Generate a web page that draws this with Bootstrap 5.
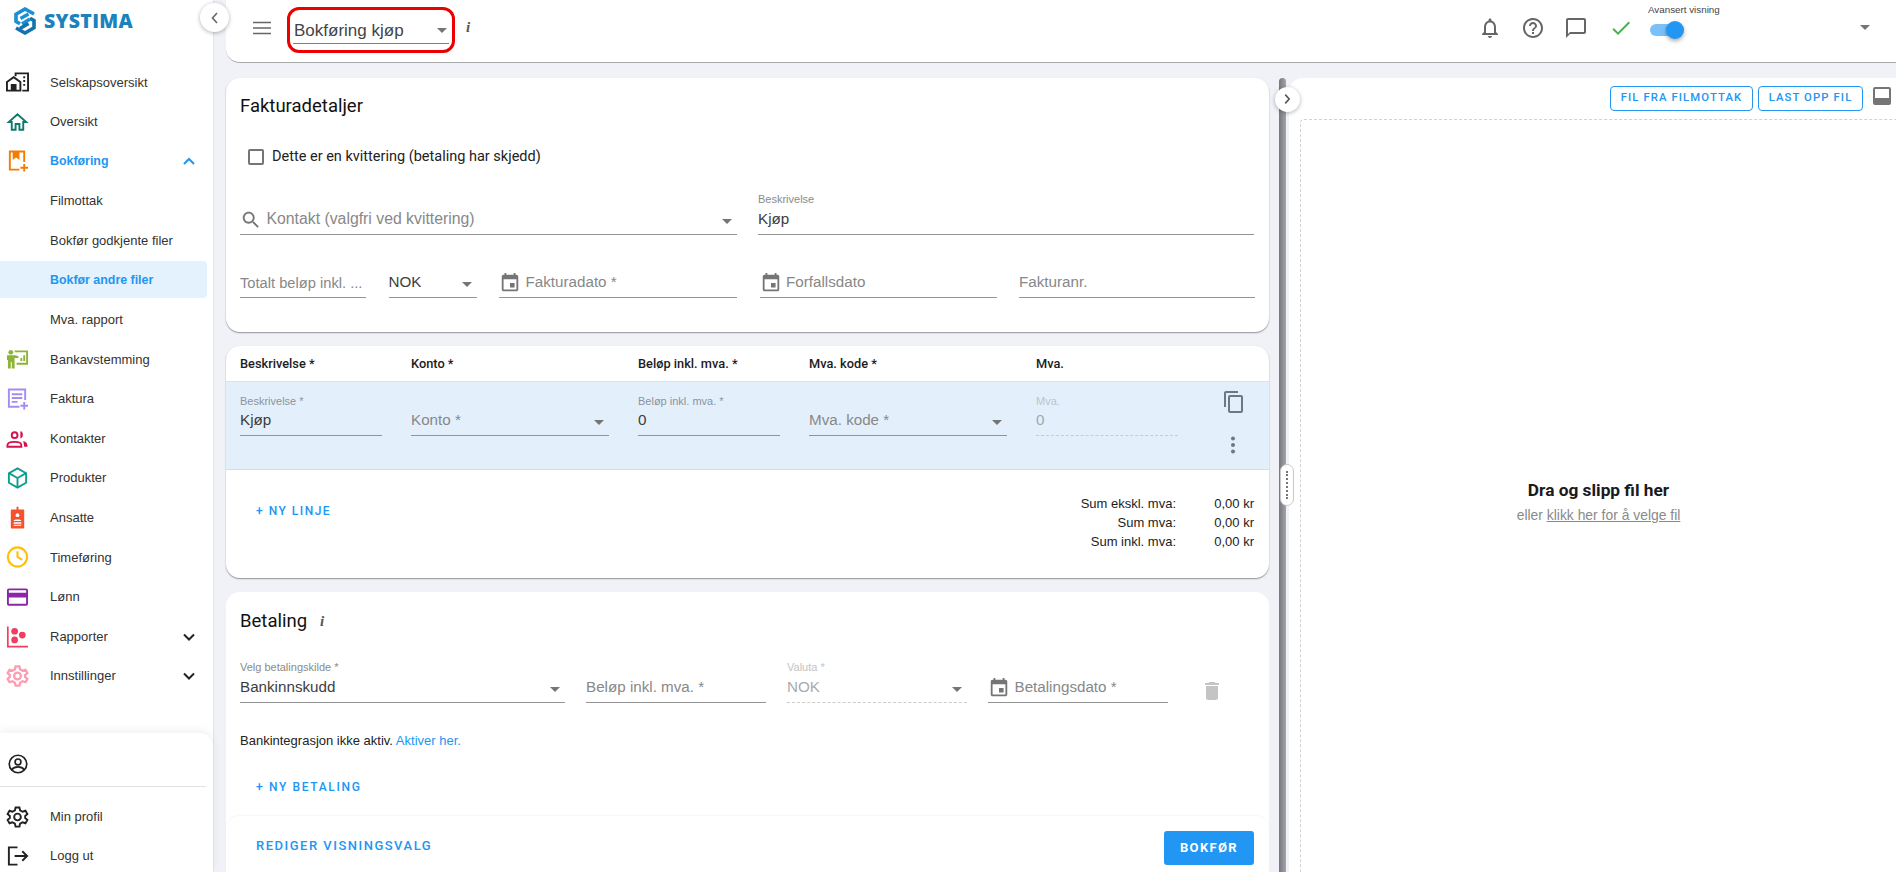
<!DOCTYPE html>
<html lang="no"><head><meta charset="utf-8"><title>Systima</title>
<link href="https://cdn.jsdelivr.net/npm/bootstrap@5.3.0/dist/css/bootstrap.min.css" rel="stylesheet">
<style>
html,body{height:872px;overflow:hidden}
body{font-family:"Liberation Sans",Arial,sans-serif;font-size:13px;color:#212121;background:#f0f2f8}
.shell{height:872px;display:flex}
.side{width:214px;flex:none;background:#fff;display:flex;flex-direction:column;position:relative;border-right:1px solid #e4e5ea}
.brand{height:62.5px;flex:none;display:flex;align-items:flex-start;padding:6px 0 0 14px;gap:8px}
.brand svg{margin-top:1px}
.brand-name{font-family:"Open Sans",sans-serif;font-weight:800;font-size:19.500px;letter-spacing:.3px;color:#1a82bd;line-height:30px}
.navi{display:flex;align-items:center;height:39.6px;flex:none;padding-left:50px;position:relative;color:#333;white-space:nowrap}
.navi svg.ico{position:absolute;left:6px;top:50%;transform:translateY(-50%);width:23px;height:23px}
.navi svg.chev{position:absolute;left:181px;top:50%;transform:translateY(-50%);width:16px;height:16px}
.navi.open{color:#2196f3;font-weight:700;font-size:12.400px}
.navi.cur{color:#2196f3;font-weight:700;font-size:12.400px;background:#e3f2fd;width:207px;border-radius:0 4px 4px 0;height:37px;margin:1px 0 1.6px}
.side-foot{margin-top:auto;height:139px;flex:none;border-radius:0 14px 0 0;box-shadow:0 -3px 10px rgba(0,0,0,.06);background:#fff}
.who{height:54px;border-bottom:1px solid #e2e2e2;margin-right:7px;margin-bottom:10px;position:relative}
.who svg{position:absolute;left:8px;top:21px;width:20px;height:20px}
.side-foot .navi{height:39px}
.fold{position:absolute;width:29px;height:29px;border-radius:50%;background:#fff;box-shadow:0 1px 4px rgba(0,0,0,.3);display:flex;align-items:center;justify-content:center;z-index:5}
.fold-l{left:200px;top:3px}
.main{flex:1;min-width:0;padding-left:12px;display:flex;flex-direction:column}
.topbar{height:63px;flex:none;background:#fff;border-radius:0 0 0 14px;border-bottom:1px solid #a9a9a9;display:flex;align-items:center;position:relative}
.burger{margin-left:27px;width:18px;height:18px;margin-top:-6px}
.sel-wrap{margin-left:16px;width:168px;height:46px;border:3.5px solid #ec0000;border-radius:12px;padding:0 3px;align-self:flex-start;margin-top:7px}
.sel-in{height:33.500px;border-bottom:1px solid #2196f3;display:flex;align-items:center;justify-content:space-between;font-size:17px;color:#444;padding:9px 2px 0 1px}
.caret-d{width:0;height:0;border-left:5px solid transparent;border-right:5px solid transparent;border-top:5px solid #757575;display:inline-block;flex:none}
.ital{font-family:"Liberation Serif",serif;font-style:italic;font-weight:700;color:#555;font-size:15px}
.top-i{margin-left:11px;margin-top:-7px}
.tools{margin-left:auto;display:flex;align-items:center;gap:19px;padding-right:26px;height:56px;align-self:flex-start}
.tools svg{width:24px;height:24px;flex:none}
.tools .check{margin:0 -.6px 0 1.200px}
.advbox{width:69px;height:60px;position:relative;flex:none;margin-left:-3px}
.adv{position:absolute;left:0;top:5px;font-size:9.800px;color:#444;white-space:nowrap}
.sw-t{position:absolute;left:2px;top:26px;width:28px;height:12px;border-radius:6px;background:#7cc0f9}
.sw-k{position:absolute;left:18px;top:23px;width:18px;height:18px;border-radius:50%;background:#2196f3;box-shadow:0 2px 4px rgba(0,0,0,.35)}
.tools .caret-d{margin-left:124px;margin-top:-2px}
.split{flex:1;display:flex;min-height:0}
.left-pane{width:1043px;flex:none;padding-top:15px;display:flex;flex-direction:column;gap:14px;position:relative}
.sheet{background:#fff;border-radius:14px;box-shadow:0 1px 1.5px rgba(0,0,0,.4)}
.sheet-a{height:254px;padding:0 14px;flex:none}
.sheet-b{height:232px;flex:none;position:relative;overflow:hidden}
.sheet-c{flex:1;padding:0 14px;position:relative;border-radius:14px 14px 0 0;box-shadow:none}
.ttl{font-family:Roboto,sans-serif;font-size:18.5px;font-weight:400;color:#111;line-height:24px}
.ttl-a{padding-top:16px}
.chk{display:flex;align-items:center;gap:8px;margin:28px 0 0 8px;font-size:14.5px;color:#222;font-family:Roboto,sans-serif}
.box{width:16px;height:16px;border:2px solid #757575;border-radius:2px;flex:none}
.gridrow{display:grid}
.r1{grid-template-columns:497px 496px;margin-top:20px;column-gap:21px}
.r2{grid-template-columns:126px 88px 238px 237px 236px;margin-top:16px;column-gap:22.5px}
.fld{height:47px;border-bottom:1px solid #949494;position:relative;display:flex;align-items:flex-end;padding-bottom:3px;font-size:15.200px;color:#888;white-space:nowrap;overflow:hidden}
.fld.wide-txt{font-size:15.800px}
.fld.tight-txt{font-size:14.700px}
.fld .lab{position:absolute;left:0;top:3px;font-size:11px;color:#8a8a8a}
.fld .val{color:#3d3d3d}
.fld .caret-d{margin-left:auto;margin-right:5px;margin-bottom:7px}
.fld svg{width:22px;height:22px;margin-right:4.500px;flex:none}
.fld.off{border-bottom:1px dashed #ccc;color:#aaa}
.fld.off .lab{color:#c3c3c3}
.fld.off .val{color:#aaa}
.heads{height:36px;display:grid;grid-template-columns:142px 198px 142px 198px 142px;column-gap:29px;padding-left:14px;align-items:center;border-bottom:1px solid #dfe3e8;font-family:Roboto,sans-serif;font-size:12.800px;font-weight:500;color:#1c1c1c}
.linerow{height:88px;background:#e3f0fc;border-bottom:1px solid #d8dde3;display:grid;grid-template-columns:142px 198px 142px 198px 142px;column-gap:29px;padding:8px 0 0 14px;position:relative;align-content:start}
.linerow .fld{border-bottom-color:#8c96a0;height:46px}
.linerow .fld.off{border-bottom:1px dashed #c4cbd2}
.linerow .lab{color:#8b939b}
.linerow .fld.off .lab{color:#bcc4cc}
.linerow .fld.off .val{color:#a0a8b0}
.copy{position:absolute;left:996px;top:8px;width:24px;height:24px}
.dots{position:absolute;left:995px;top:51px;width:24px;height:24px}
.ny{font-family:Roboto,sans-serif;font-weight:500;font-size:12px;letter-spacing:1.500px;color:#2196f3;white-space:nowrap}
.ny-a{position:absolute;left:30px;top:156px}
.sums{position:absolute;right:15px;top:148px;display:grid;grid-template-columns:auto 78px;text-align:right;font-size:13px;line-height:19px;color:#1c1c1c}
.pay-h{display:flex;gap:13px;align-items:center;padding-top:17px}
.pay{grid-template-columns:325px 180px 180px 180px;margin-top:23px;column-gap:21px}
.trash{position:absolute;left:974px;top:87px;width:24px;height:24px}
.bank{margin-top:28px;font-size:13px;color:#222}
.bank a{color:#2196f3;text-decoration:none}
.ny-b{position:absolute;left:30px;top:186px;letter-spacing:1.650px}
.foot{position:absolute;left:0;right:0;bottom:0;height:56px;background:#fff;border-radius:14px 14px 0 0;box-shadow:0 -1px 2px rgba(0,0,0,.04);display:flex;align-items:center;justify-content:space-between;padding:0 15px 0 30px}
.ny-c{font-size:13px;letter-spacing:1.500px;margin-top:4px}
.go{background:#2196f3;color:#fff;font-family:Roboto,sans-serif;font-weight:700;font-size:13px;letter-spacing:1.350px;border:0;border-radius:3px;width:90px;height:34px;padding:0;margin-top:7px}
.bar{width:20px;flex:none;position:relative;margin-top:15px;z-index:6}
.bar-line{position:absolute;left:10px;top:0;bottom:0;width:7px;border-radius:4px 4px 0 0;background:linear-gradient(90deg,#76777c,#a3a4a9)}
.knob{position:absolute;left:11px;top:386px;width:14px;height:42px;background:#fff;border:1px solid #c9c9c9;border-radius:7px;display:flex;align-items:center;justify-content:center;z-index:4}
.knob i{display:block;height:28px;border-left:2px dotted #777}
.fold-r{position:absolute;left:5.500px;top:8.500px;width:25px;height:25px;border-radius:50%;background:#fff;box-shadow:0 1px 4px rgba(0,0,0,.3);display:flex;align-items:center;justify-content:center;z-index:5}
.right-pane{flex:1;min-width:0;background:#fff;margin-top:15px;padding-left:11px;display:flex;flex-direction:column;position:relative;border-radius:14px 0 0 0}
.filebar{height:26px;display:flex;justify-content:flex-end;gap:5px;flex:none;padding-right:33px;margin:8px 0 0}
.ob{font-family:Roboto,sans-serif;font-weight:500;font-size:11.300px;letter-spacing:1.100px;color:#2196f3;border:1px solid #2196f3;border-radius:4px;background:#fff;padding:0;height:25px;white-space:nowrap}
.ob-a{width:143px}.ob-b{width:105px}
.dockic{position:absolute;right:5px;top:9px;width:18px;height:18px;background:#757575;border-radius:2px}
.dockic::after{content:"";position:absolute;left:2px;right:2px;top:2px;height:9px;background:#fff}
.drop{flex:1;margin-top:7px;border:1px dashed #d2d2d2;border-width:1px 0 0 1px;border-radius:4px 0 0 0;display:flex;flex-direction:column;align-items:center;justify-content:center;padding-top:12px}
.drop b{font-family:Roboto,sans-serif;font-size:17.300px;font-weight:700;color:#1a1a1a}
.drop span{font-size:13.900px;color:#8a8a8a;margin-top:1px}
.drop u{color:#8a8a8a}
</style></head><body>
<div class="shell">
<aside class="side">
  <div class="fold fold-l"><svg width="16" height="16" viewBox="0 0 16 16" fill="none" stroke="#666" stroke-width="1.6"><path d="M10 3 5.500 8l4.500 5"/></svg></div>
  <div class="brand">
    <svg width="22" height="28" viewBox="0 0 22 28" fill="none" stroke-width="3.600" stroke-linejoin="miter"><path stroke="#1b8fd6" d="M20 7 11 2 2 7.200v7.300l4 2.300"/><path stroke="#1572ad" d="M2 21l9 5 9-5.200v-7.300l-4-2.300"/><path stroke="#1b8fd6" d="M6.500 11.500 14.500 7M8 17l8-5"/><path stroke="#1572ad" d="M6 21.500l8.500-5"/></svg>
    <span class="brand-name">SYSTIMA</span>
  </div>
  <div class="navi"><svg class="ico" viewBox="0 0 24 24" fill="none" stroke="#222" stroke-width="2"><path d="M1 12 8 7l7 5v9H1z"/><path d="M6 21v-6h4v6" fill="#222"/><path d="M10 6V3h13v18h-6"/><path d="M18 7h2M18 11h2M18 15h2"/></svg>Selskapsoversikt</div>
  <div class="navi"><svg class="ico" viewBox="0 0 24 24" fill="none" stroke="#0f7a6c" stroke-width="2"><path d="M3 12 12 4l9 8h-3v8h-4v-6h-4v6H6v-8z"/></svg>Oversikt</div>
  <div class="navi open"><svg class="ico" viewBox="0 0 24 24" fill="none" stroke="#f57c00" stroke-width="2"><path d="M14 21H4V2h15v11"/><path d="M8 2v7l2.500-2 2.500 2V2" fill="#f57c00"/><path d="M19 15v8M15 19h8"/></svg>Bokføring<svg class="chev" viewBox="0 0 16 16" fill="none" stroke="#2196f3" stroke-width="2"><path d="M3 11l5-5 5 5"/></svg></div>
  <div class="navi">Filmottak</div>
  <div class="navi">Bokfør godkjente filer</div>
  <div class="navi cur">Bokfør andre filer</div>
  <div class="navi">Mva. rapport</div>
  <div class="navi"><svg class="ico" viewBox="0 0 24 24" fill="#8fb339"><circle cx="5" cy="5" r="2.500"/><path d="M1 8h9l3 1v2H9v11H6v-7H5v7H2v-9H1z"/><path d="M9 3h14v15H11v-2h10V5H9z"/><path d="M15 14v-3h2v3zM18 14V8h2v6z"/></svg>Bankavstemming</div>
  <div class="navi"><svg class="ico" viewBox="0 0 24 24" fill="none" stroke="#a48cf2" stroke-width="2"><path d="M14 20H3V2h17v11"/><path d="M6 7h11M6 11h11M6 15h6"/><path d="M19 15v8M15 19h8"/></svg>Faktura</div>
  <div class="navi"><svg class="ico" viewBox="0 0 24 24" fill="none" stroke="#d3124f" stroke-width="2"><circle cx="9" cy="8" r="3"/><path d="M1.500 20v-1.500c0-2.500 3-3.500 7.500-3.500s7 1 7 3.500V20z"/><path d="M15 4c3.500 0 3.500 7 0 7.500zM18 14c3 .5 4.500 2.500 4.500 6H19z" fill="#d3124f" stroke="none"/></svg>Kontakter</div>
  <div class="navi"><svg class="ico" viewBox="0 0 24 24" fill="none" stroke="#0f9d8f" stroke-width="2"><path d="M12 2 21 7v10l-9 5-9-5V7z"/><path d="M3 7l9 5 9-5M12 12v10"/></svg>Produkter</div>
  <div class="navi"><svg class="ico" viewBox="0 0 24 24" fill="#f4512c"><path d="M11 0h2v3h5a1 1 0 0 1 1 1v18a1 1 0 0 1-1 1H6a1 1 0 0 1-1-1V4a1 1 0 0 1 1-1h5z"/><circle cx="12" cy="9" r="2" fill="#fff"/><path d="M8 15c0-2 8-2 8 0zM8 16.500h8V18H8zM8 19h8v1H8z" fill="#fff"/></svg>Ansatte</div>
  <div class="navi"><svg class="ico" viewBox="0 0 24 24" fill="none" stroke="#ffc107" stroke-width="2.200"><circle cx="12" cy="12" r="10"/><path d="M12 6v6l5 3"/></svg>Timeføring</div>
  <div class="navi"><svg class="ico" viewBox="0 0 24 24" fill="none" stroke="#8e24aa" stroke-width="2"><rect x="2" y="4" width="20" height="16" rx="1"/><path d="M2 10h20" stroke-width="5"/></svg>Lønn</div>
  <div class="navi"><svg class="ico" viewBox="0 0 24 24" fill="#f03e62"><path d="M1 1h1.800v20H23v2H1z"/><circle cx="9" cy="6" r="3.500"/><circle cx="9" cy="15" r="3.500"/><circle cx="17" cy="10" r="3.500"/></svg>Rapporter<svg class="chev" viewBox="0 0 16 16" fill="none" stroke="#222" stroke-width="2"><path d="M3 5.500l5 5 5-5"/></svg></div>
  <div class="navi"><svg class="ico" viewBox="0 0 24 24" fill="none" stroke="#ff9db0" stroke-width="2.400"><circle cx="12" cy="12" r="3.500"/><path d="M10 2h4l.7 3 2.600 1.500 3-1 2 3.500-2.300 2v2l2.300 2-2 3.500-3-1-2.600 1.500-.7 3h-4l-.7-3-2.600-1.500-3 1-2-3.500 2.300-2v-2l-2.300-2 2-3.500 3 1L9.300 5z"/></svg>Innstillinger<svg class="chev" viewBox="0 0 16 16" fill="none" stroke="#222" stroke-width="2"><path d="M3 5.500l5 5 5-5"/></svg></div>
  <div class="side-foot">
    <div class="who"><svg viewBox="0 0 24 24" fill="none" stroke="#222" stroke-width="2"><circle cx="12" cy="12" r="10.500"/><circle cx="12" cy="9.500" r="3.500"/><path d="M4.500 19c2-3 5-3.500 7.500-3.500s5.500.5 7.500 3.500"/></svg></div>
    <div class="navi"><svg class="ico" viewBox="0 0 24 24" fill="none" stroke="#222" stroke-width="2"><circle cx="12" cy="12" r="3.500"/><path d="M10 2h4l.7 3 2.600 1.500 3-1 2 3.500-2.300 2v2l2.300 2-2 3.500-3-1-2.600 1.500-.7 3h-4l-.7-3-2.600-1.500-3 1-2-3.500 2.300-2v-2l-2.300-2 2-3.500 3 1L9.300 5z"/></svg>Min profil</div>
    <div class="navi"><svg class="ico" viewBox="0 0 24 24" fill="none" stroke="#222" stroke-width="2"><path d="M12 3H3v18h9M9 12h13M17 7l5 5-5 5"/></svg>Logg ut</div>
  </div>
</aside>
<main class="main">
  <header class="topbar">
    <svg class="burger" viewBox="0 0 18 18" stroke="#666" stroke-width="1.500"><path d="M0 3.500h18M0 9h18M0 14.500h18"/></svg>
    <div class="sel-wrap"><div class="sel-in">Bokføring kjøp<i class="caret-d"></i></div></div>
    <span class="ital top-i">i</span>
    <div class="tools">
      <svg viewBox="0 0 24 24" fill="#666"><path d="M12 22c1.100 0 2-.9 2-2h-4c0 1.100.9 2 2 2zm6-6v-5c0-3.070-1.630-5.640-4.500-6.320V4c0-.83-.67-1.500-1.500-1.500s-1.500.67-1.500 1.500v.68C7.640 5.360 6 7.920 6 11v5l-2 2v1h16v-1l-2-2zm-2 1H8v-6c0-2.480 1.510-4.500 4-4.500s4 2.020 4 4.500v6z"/></svg>
      <svg viewBox="0 0 24 24" fill="#666"><path d="M11 18h2v-2h-2v2zm1-16C6.480 2 2 6.480 2 12s4.480 10 10 10 10-4.480 10-10S17.520 2 12 2zm0 18c-4.410 0-8-3.590-8-8s3.590-8 8-8 8 3.590 8 8-3.590 8-8 8zm0-14c-2.210 0-4 1.790-4 4h2c0-1.100.9-2 2-2s2 .9 2 2c0 2-3 1.750-3 5h2c0-2.250 3-2.500 3-5 0-2.210-1.790-4-4-4z"/></svg>
      <svg viewBox="0 0 24 24" fill="#666"><path d="M20 2H4c-1.100 0-2 .9-2 2v18l4-4h14c1.100 0 2-.9 2-2V4c0-1.100-.9-2-2-2zm0 14H6l-2 2V4h16v12z"/></svg>
      <svg class="check" viewBox="0 0 24 24" fill="#4caf50"><path d="M9 16.170 4.830 12l-1.420 1.410L9 19 21 7l-1.410-1.410z"/></svg>
      <div class="advbox"><span class="adv">Avansert visning</span><span class="sw-t"></span><span class="sw-k"></span></div>
      <i class="caret-d"></i>
    </div>
  </header>
  <div class="split">
    <section class="left-pane">
      <div class="sheet sheet-a">
        <div class="ttl ttl-a">Fakturadetaljer</div>
        <div class="chk"><span class="box"></span>Dette er en kvittering (betaling har skjedd)</div>
        <div class="gridrow r1">
          <div class="fld wide-txt"><svg viewBox="0 0 24 24" fill="#757575"><path d="M15.500 14h-.79l-.28-.27C15.410 12.590 16 11.110 16 9.500 16 5.910 13.090 3 9.500 3S3 5.910 3 9.500 5.910 16 9.500 16c1.610 0 3.090-.59 4.230-1.570l.27.28v.79l5 4.990L20.490 19l-4.990-5zm-6 0C7.010 14 5 11.990 5 9.500S7.010 5 9.500 5 14 7.010 14 9.500 11.990 14 9.500 14z"/></svg>Kontakt (valgfri ved kvittering)<i class="caret-d"></i></div>
          <div class="fld"><span class="lab">Beskrivelse</span><span class="val">Kjøp</span></div>
        </div>
        <div class="gridrow r2">
          <div class="fld tight-txt">Totalt beløp inkl. ...</div>
          <div class="fld"><span class="val">NOK</span><i class="caret-d"></i></div>
          <div class="fld"><svg viewBox="0 0 24 24" fill="#757575"><path d="M17 12h-5v5h5v-5zM16 1v2H8V1H6v2H5c-1.110 0-1.990.9-1.990 2L3 19c0 1.100.89 2 2 2h14c1.100 0 2-.9 2-2V5c0-1.100-.9-2-2-2h-1V1h-2zm3 18H5V8h14v11z"/></svg>Fakturadato *</div>
          <div class="fld"><svg viewBox="0 0 24 24" fill="#757575"><path d="M17 12h-5v5h5v-5zM16 1v2H8V1H6v2H5c-1.110 0-1.990.9-1.990 2L3 19c0 1.100.89 2 2 2h14c1.100 0 2-.9 2-2V5c0-1.100-.9-2-2-2h-1V1h-2zm3 18H5V8h14v11z"/></svg>Forfallsdato</div>
          <div class="fld">Fakturanr.</div>
        </div>
      </div>
      <div class="sheet sheet-b">
        <div class="heads"><span>Beskrivelse *</span><span>Konto *</span><span>Beløp inkl. mva. *</span><span>Mva. kode *</span><span>Mva.</span></div>
        <div class="linerow">
          <div class="fld"><span class="lab">Beskrivelse *</span><span class="val">Kjøp</span></div>
          <div class="fld">Konto *<i class="caret-d"></i></div>
          <div class="fld"><span class="lab">Beløp inkl. mva. *</span><span class="val">0</span></div>
          <div class="fld">Mva. kode *<i class="caret-d"></i></div>
          <div class="fld off"><span class="lab">Mva.</span><span class="val">0</span></div>
          <svg class="copy" viewBox="0 0 24 24" fill="#6f7880"><path d="M16 1H4c-1.100 0-2 .9-2 2v14h2V3h12V1zm3 4H8c-1.100 0-2 .9-2 2v14c0 1.100.9 2 2 2h11c1.100 0 2-.9 2-2V7c0-1.100-.9-2-2-2zm0 16H8V7h11v14z"/></svg>
          <svg class="dots" viewBox="0 0 24 24" fill="#6f7880"><circle cx="12" cy="5.500" r="2"/><circle cx="12" cy="12" r="2"/><circle cx="12" cy="18.500" r="2"/></svg>
        </div>
        <span class="ny ny-a">+ NY LINJE</span>
        <div class="sums"><span>Sum ekskl. mva:</span><span>0,00 kr</span><span>Sum mva:</span><span>0,00 kr</span><span>Sum inkl. mva:</span><span>0,00 kr</span></div>
      </div>
      <div class="sheet sheet-c">
        <div class="pay-h"><span class="ttl">Betaling</span><span class="ital">i</span></div>
        <div class="gridrow pay">
          <div class="fld"><span class="lab">Velg betalingskilde *</span><span class="val">Bankinnskudd</span><i class="caret-d"></i></div>
          <div class="fld">Beløp inkl. mva. *</div>
          <div class="fld off"><span class="lab">Valuta *</span><span class="val">NOK</span><i class="caret-d"></i></div>
          <div class="fld"><svg viewBox="0 0 24 24" fill="#757575"><path d="M17 12h-5v5h5v-5zM16 1v2H8V1H6v2H5c-1.110 0-1.990.9-1.990 2L3 19c0 1.100.89 2 2 2h14c1.100 0 2-.9 2-2V5c0-1.100-.9-2-2-2h-1V1h-2zm3 18H5V8h14v11z"/></svg>Betalingsdato *</div>
        </div>
        <svg class="trash" viewBox="0 0 24 24" fill="#c4c4c4"><path d="M6 19c0 1.100.9 2 2 2h8c1.100 0 2-.9 2-2V7H6v12zM19 4h-3.500l-1-1h-5l-1 1H5v2h14V4z"/></svg>
        <div class="bank">Bankintegrasjon ikke aktiv. <a href="#">Aktiver her.</a></div>
        <span class="ny ny-b">+ NY BETALING</span>
        <div class="foot"><span class="ny ny-c">REDIGER VISNINGSVALG</span><button class="go">BOKFØR</button></div>
      </div>
    </section>
    <div class="bar"><div class="bar-line"></div><div class="fold-r"><svg width="14" height="14" viewBox="0 0 16 16" fill="none" stroke="#555" stroke-width="1.800"><path d="M6 3l4.500 5L6 13"/></svg></div><div class="knob"><i></i></div></div>
    <section class="right-pane">
      <div class="filebar"><button class="ob ob-a">FIL FRA FILMOTTAK</button><button class="ob ob-b">LAST OPP FIL</button></div>
      <span class="dockic"></span>
      <div class="drop"><b>Dra og slipp fil her</b><span>eller <u>klikk her for å velge fil</u></span></div>
    </section>
  </div>
</main>
</div>
</body></html>
